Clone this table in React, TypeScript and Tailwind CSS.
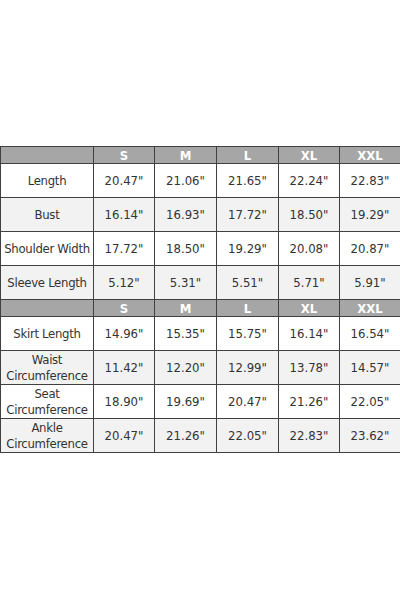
import React from 'react';

const sizes = ['S', 'M', 'L', 'XL', 'XXL'];

const topRows: [string, string[]][] = [
  ['Length', ['20.47"', '21.06"', '21.65"', '22.24"', '22.83"']],
  ['Bust', ['16.14"', '16.93"', '17.72"', '18.50"', '19.29"']],
  ['Shoulder Width', ['17.72"', '18.50"', '19.29"', '20.08"', '20.87"']],
  ['Sleeve Length', ['5.12"', '5.31"', '5.51"', '5.71"', '5.91"']],
];

const bottomRows: [string, string[]][] = [
  ['Skirt Length', ['14.96"', '15.35"', '15.75"', '16.14"', '16.54"']],
  ['Waist Circumference', ['11.42"', '12.20"', '12.99"', '13.78"', '14.57"']],
  ['Seat Circumference', ['18.90"', '19.69"', '20.47"', '21.26"', '22.05"']],
  ['Ankle Circumference', ['20.47"', '21.26"', '22.05"', '22.83"', '23.62"']],
];

const HeaderRow: React.FC = () => (
  <tr className="h-[17px] bg-[#a6a6a6]">
    <td className="border border-[#404040]"></td>
    {sizes.map(s => (
      <td key={s} className="border border-[#404040] text-center text-white font-bold text-[13px] leading-[15px]">
        {s}
      </td>
    ))}
  </tr>
);

const DataRow: React.FC<{ label: string; values: string[]; shaded: boolean }> = ({ label, values, shaded }) => {
  const twoLine = label.includes('Circumference');
  return (
    <tr className={`h-[34px] ${shaded ? 'bg-[#f2f2f2]' : 'bg-white'}`}>
      <td className="border border-[#404040] text-center px-0 leading-[16px] whitespace-nowrap tracking-[-0.3px]">
        {twoLine ? (
          <>
            {label.split(' ')[0]}
            <br />
            Circumference
          </>
        ) : (
          label
        )}
      </td>
      {values.map((v, i) => (
        <td key={i} className="border border-[#404040] text-center">
          {v}
        </td>
      ))}
    </tr>
  );
};

export default function App() {
  return (
    <div className="w-[400px] h-[600px] bg-white flex flex-col justify-center pb-[1px]">
      <table
        className="w-[400px] border-collapse table-fixed text-[13px] text-[#333333]"
        style={{ fontFamily: '"DejaVu Sans Condensed", "Liberation Sans Narrow", "Liberation Sans", sans-serif' }}
      >
        <colgroup>
          <col className="w-[93px]" />
          <col className="w-[61px]" />
          <col className="w-[62px]" />
          <col className="w-[62px]" />
          <col className="w-[61px]" />
          <col className="w-[61px]" />
        </colgroup>
        <tbody>
          <HeaderRow />
          {topRows.map(([label, values], i) => (
            <DataRow key={label} label={label} values={values} shaded={i % 2 === 1} />
          ))}
          <HeaderRow />
          {bottomRows.map(([label, values], i) => (
            <DataRow key={label} label={label} values={values} shaded={i % 2 === 1} />
          ))}
        </tbody>
      </table>
    </div>
  );
}
